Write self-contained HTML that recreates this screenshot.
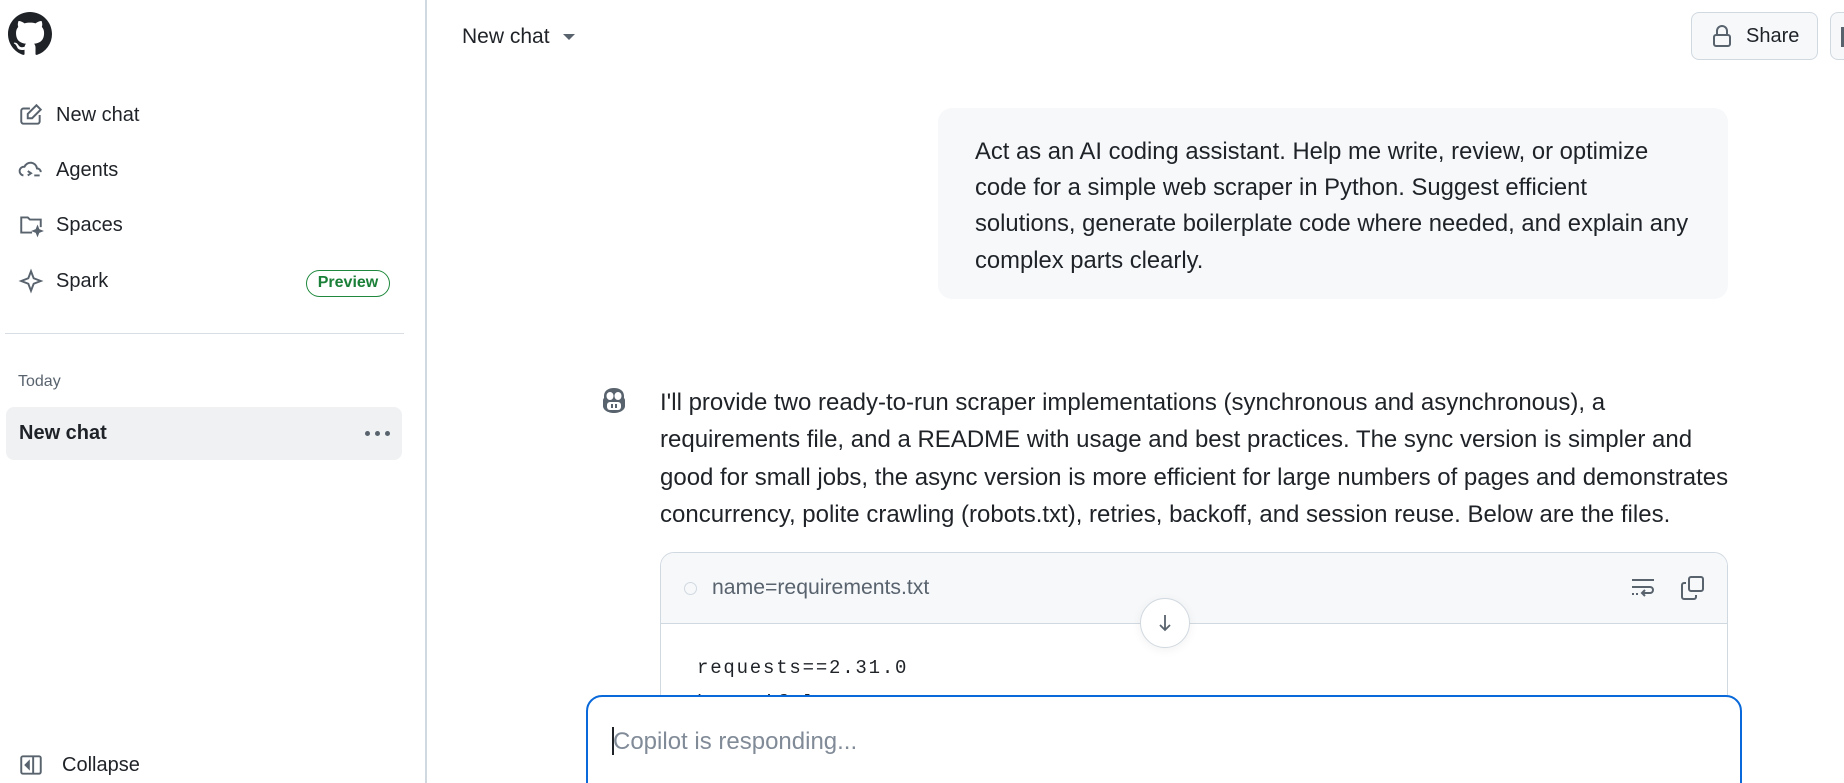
<!DOCTYPE html>
<html><head><meta charset="utf-8"><style>
*{margin:0;padding:0;box-sizing:border-box}
html{overflow:hidden;width:1844px;height:783px}
body{width:1844px;height:783px;overflow:hidden;background:#fff;font-family:"Liberation Sans",sans-serif;color:#1f2328;position:relative}
.abs{position:absolute}
.side{left:0;top:0;width:427px;height:783px;border-right:2px solid #d1d9e0}
.nav{left:18px;font-size:20px;display:flex;align-items:center;height:30px}
.nav svg{width:26px;height:26px;margin-right:12px}
.badge{left:306px;top:270px;width:84px;height:27px;border:1.5px solid #1f883d;border-radius:14px;color:#1a7f37;font-size:16px;font-weight:bold;text-align:center;line-height:24px}
.txt{white-space:nowrap}
</style></head><body>
<div class="abs side">
<svg class="abs" style="left:8px;top:12px" width="44" height="44" viewBox="0 0 16 16"><path fill="#1f2328" d="M8 0C3.58 0 0 3.58 0 8c0 3.540 2.29 6.53 5.47 7.59.4.07.55-.17.55-.38 0-.19-.01-.82-.01-1.49-2.01.37-2.530-.49-2.690-.94-.09-.23-.48-.94-.82-1.13-.28-.15-.68-.52-.01-.53.63-.01 1.08.58 1.23.82.72 1.21 1.870.87 2.33.66.07-.52.28-.87.51-1.07-1.78-.2-3.64-.89-3.64-3.95 0-.87.31-1.59.82-2.15-.08-.2-.36-1.02.08-2.12 0 0 .67-.21 2.2.82.64-.18 1.32-.27 2-.27.68 0 1.36.09 2 .27 1.53-1.04 2.2-.82 2.2-.82.44 1.1.16 1.92.08 2.12.51.56.82 1.27.82 2.15 0 3.07-1.87 3.75-3.65 3.95.29.25.54.73.54 1.48 0 1.07-.01 1.930-.01 2.2 0 .21.15.46.55.38A8.013 8.013 0 0016 8c0-4.42-3.58-8-8-8z"/></svg>
<div class="abs nav" style="top:100px"><svg viewBox="0 0 24 24" fill="none" stroke="#59636e" stroke-width="1.8"><path d="M20 12v6a2 2 0 0 1-2 2H5a2 2 0 0 1-2-2V8a2 2 0 0 1 2-2h6"/><path d="M17 3l4 4-8 8H9v-4z"/></svg>New chat</div>
<div class="abs nav" style="top:155px"><svg viewBox="0 0 24 24" fill="none" stroke="#59636e" stroke-width="1.8"><path d="M5 17a4 4 0 0 1 1-8 6 6 0 0 1 11.5 1.5A3.5 3.5 0 0 1 21 14"/><path d="M9 13l3 2-3 2M15 17h5"/></svg>Agents</div>
<div class="abs nav" style="top:210px"><svg viewBox="0 0 24 24" fill="none" stroke="#59636e" stroke-width="1.8"><path d="M13 19H3V5h6l2 2h10v7"/><path d="M18 14l1 2.5 2.5 1-2.5 1-1 2.5-1-2.5-2.5-1 2.5-1z" fill="#59636e"/></svg>Spaces</div>
<div class="abs nav" style="top:266px"><svg viewBox="0 0 24 24" fill="none" stroke="#59636e" stroke-width="1.8"><path d="M12 3l2.5 6.5L21 12l-6.5 2.5L12 21l-2.5-6.5L3 12l6.5-2.5z"/></svg>Spark</div>
<div class="abs badge">Preview</div>
<div class="abs" style="left:5px;top:333px;width:399px;height:1px;background:#d8dee4"></div>
<div class="abs" style="left:18px;top:373px;font-size:16px;color:#59636e">Today</div>
<div class="abs" style="left:6px;top:407px;width:396px;height:53px;background:#eff1f3;border-radius:8px"></div>
<div class="abs" style="left:19px;top:422px;font-size:20px;font-weight:bold">New chat</div>
<div class="abs" style="left:365px;top:431px;width:5px;height:5px;border-radius:50%;background:#59636e;box-shadow:10px 0 #59636e,20px 0 #59636e"></div>
<div class="abs nav" style="top:750px"><svg viewBox="0 0 24 24" fill="none" stroke="#59636e" stroke-width="1.8"><rect x="3" y="4" width="18" height="16" rx="1.5"/><path d="M14 4v16"/><path d="M10 9l-3 3 3 3z" fill="#59636e"/></svg><span style="margin-left:6px">Collapse</span></div>
</div>

<div class="abs" style="left:462px;top:25px;font-size:21px">New chat</div>
<svg class="abs" style="left:563px;top:34px" width="12" height="7"><path d="M0 0h12L6 6z" fill="#59636e"/></svg>
<div class="abs" style="left:1691px;top:12px;width:127px;height:48px;border:1px solid #d1d9e0;border-radius:8px;background:#f6f8fa"></div>
<svg class="abs" style="left:1712px;top:24px" width="20" height="24" viewBox="0 0 20 24" fill="none" stroke="#59636e" stroke-width="2"><rect x="2" y="11" width="16" height="11" rx="2"/><path d="M5 11V7a5 5 0 0 1 10 0v4"/></svg>
<div class="abs" style="left:1746px;top:25px;font-size:20px">Share</div>
<div class="abs" style="left:1830px;top:12px;width:30px;height:48px;border:1px solid #d1d9e0;border-radius:8px;background:#f6f8fa"></div>
<div class="abs" style="left:1841px;top:27px;width:3px;height:20px;background:#59636e"></div>

<div class="abs" style="left:938px;top:108px;width:790px;height:191px;background:#f6f8fa;border-radius:14px"></div>
<div class="abs txt" style="left:975px;top:134px;font-size:23.8px;line-height:36.2px">Act as an AI coding assistant. Help me write, review, or optimize<br>code for a simple web scraper in Python. Suggest efficient<br>solutions, generate boilerplate code where needed, and explain any<br>complex parts clearly.</div>

<svg class="abs" style="left:601px;top:385px" width="26" height="30" viewBox="0 0 26 30"><path d="M13 3C7 3 3 6 3 11v2c-1 1-1 2-1 3v5c0 4 5 7 11 7s11-3 11-7v-5c0-1 0-2-1-3v-2c0-5-4-8-10-8z" fill="#59636e"/><ellipse cx="9" cy="11" rx="3.5" ry="4" fill="#fff"/><ellipse cx="17" cy="11" rx="3.5" ry="4" fill="#fff"/><rect x="6" y="17" width="14" height="8" rx="3" fill="#fff"/><rect x="10" y="19" width="2" height="4" fill="#59636e"/><rect x="14" y="19" width="2" height="4" fill="#59636e"/></svg>
<div class="abs txt" style="left:660px;top:384px;font-size:24px;line-height:37.3px">I'll provide two ready-to-run scraper implementations (synchronous and asynchronous), a<br>requirements file, and a README with usage and best practices. The sync version is simpler and<br>good for small jobs, the async version is more efficient for large numbers of pages and demonstrates<br>concurrency, polite crawling (robots.txt), retries, backoff, and session reuse. Below are the files.</div>

<div class="abs" style="left:660px;top:552px;width:1068px;height:260px;border:1px solid #d1d9e0;border-radius:14px;overflow:hidden">
<div style="height:71px;background:#f6f8fa;border-bottom:1px solid #d1d9e0"></div>
</div>
<div class="abs" style="left:684px;top:582px;width:13px;height:13px;border:1px solid #d1d9e0;border-radius:50%"></div>
<div class="abs" style="left:712px;top:576px;font-size:21.2px;color:#59636e">name=requirements.txt</div>
<svg class="abs" style="left:1630px;top:576px" width="26" height="24" viewBox="0 0 26 24" fill="none" stroke="#59636e" stroke-width="2"><path d="M2 4h22M2 11h18a3 3 0 0 1 0 6h-7M15 14l-3 3 3 3M2 18h2M6 18h2"/></svg>
<svg class="abs" style="left:1680px;top:575px" width="26" height="26" viewBox="0 0 26 26" fill="none" stroke="#59636e" stroke-width="2"><rect x="9" y="2" width="14" height="14" rx="2"/><path d="M6 8H4a2 2 0 0 0-2 2v12a2 2 0 0 0 2 2h10a2 2 0 0 0 2-2v-2"/></svg>
<div class="abs" style="left:1140px;top:598px;width:50px;height:50px;border:1px solid #d1d9e0;border-radius:50%;background:#fff;box-shadow:0 2px 10px rgba(0,0,0,.06)"></div>
<svg class="abs" style="left:1157px;top:613px" width="16" height="20" viewBox="0 0 16 20" fill="none" stroke="#59636e" stroke-width="1.8"><path d="M8 2v15M3 12l5 5 5-5"/></svg>
<div class="abs" style="left:697px;top:651px;font-family:'Liberation Mono',monospace;font-size:19px;letter-spacing:1.8px;line-height:35px">requests==2.31.0<br>beautifulsoup4==4.12.2</div>

<div class="abs" style="left:586px;top:695px;width:1156px;height:110px;border:2px solid #0969da;border-radius:16px;background:#fff"></div>
<div class="abs" style="left:612px;top:727px;width:1.5px;height:28px;background:#1f2328"></div>
<div class="abs" style="left:613px;top:728px;font-size:24px;color:#818b98">Copilot is responding...</div>
</body></html>
